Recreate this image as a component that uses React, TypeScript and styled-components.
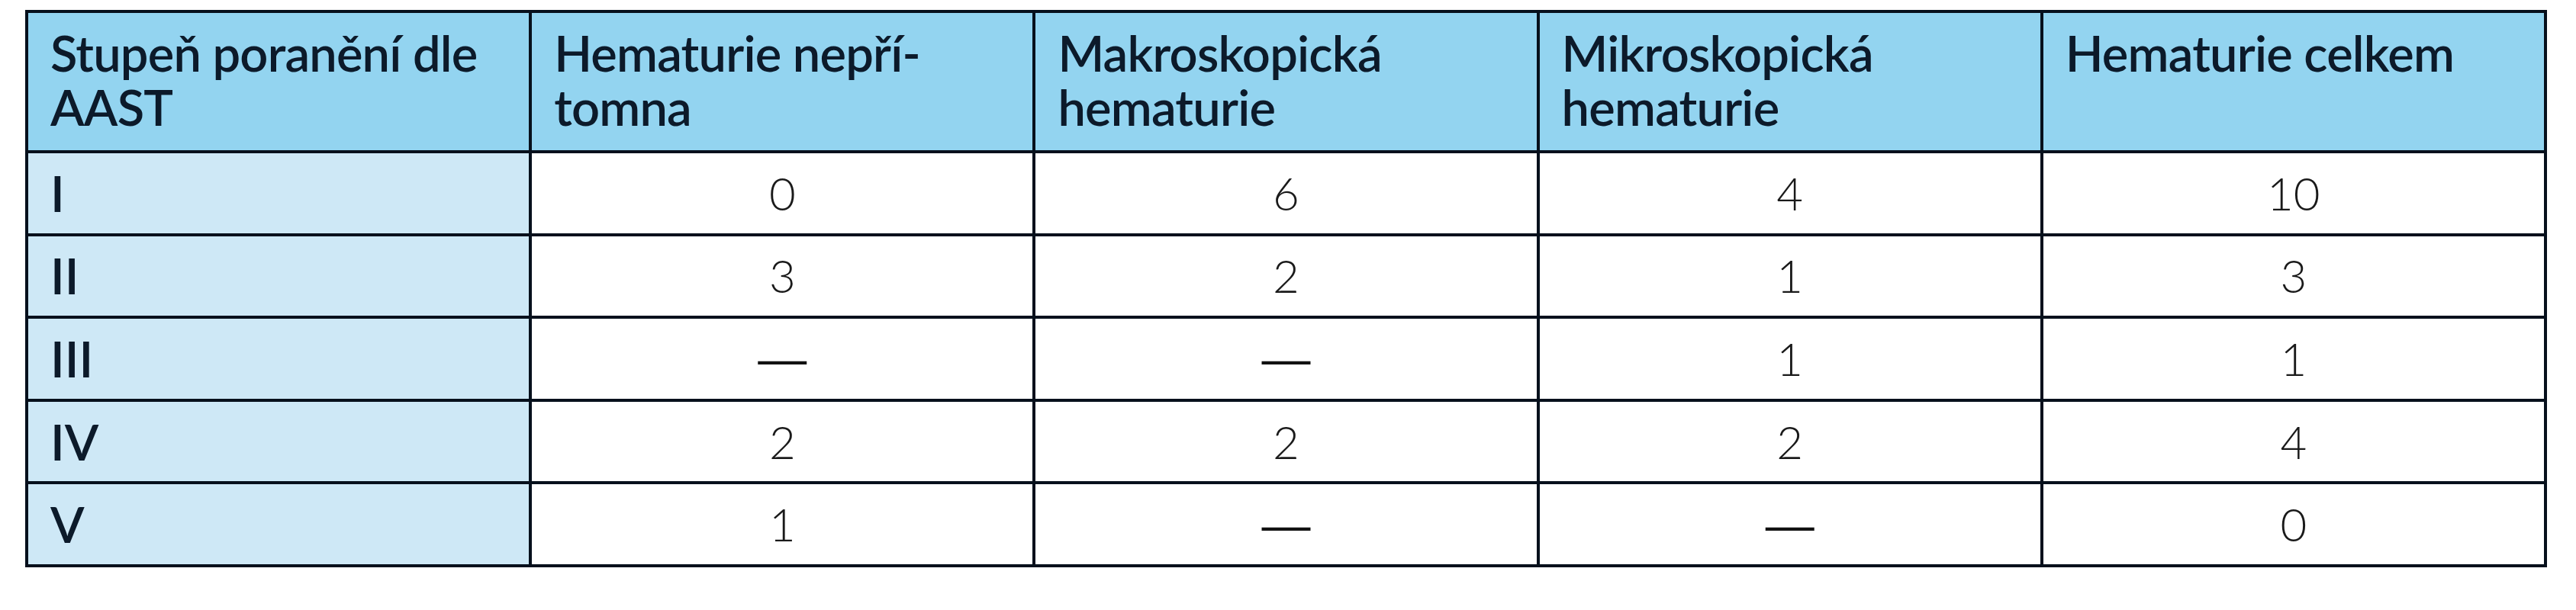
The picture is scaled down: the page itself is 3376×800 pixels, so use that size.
import React from "react";
import styled, { createGlobalStyle } from "styled-components";

const GlobalStyle = createGlobalStyle`
  html, body {
    margin: 0;
    padding: 0;
    background: #ffffff;
  }
  body {
    font-family: Lato, "Open Sans", "Liberation Sans", sans-serif;
  }
`;

const Page = styled.div`
  width: 3376px;
  height: 800px;
  padding: 13px 0 0 33px;
  box-sizing: border-box;
  background: #ffffff;
`;

const Table = styled.table`
  width: 3305px;
  table-layout: fixed;
  border-collapse: collapse;
  border: 4px solid #07101c;
`;

const HeadCell = styled.th`
  height: 184px;
  box-sizing: border-box;
  padding: 17px 20px 0 29px;
  vertical-align: top;
  text-align: left;
  background: #93d4f0;
  border: 4px solid #07101c;
  font-family: Lato, "Open Sans", sans-serif;
  font-weight: 600;
  font-size: 65px;
  line-height: 71px;
  color: #0c1a2a;
  letter-spacing: -0.8px;
`;

const Row = styled.tr`
  height: 108.6px;
`;

const GradeCell = styled.td`
  box-sizing: border-box;
  padding: 0 20px 0 29px;
  vertical-align: middle;
  text-align: left;
  background: #cee8f6;
  border: 4px solid #07101c;
  font-family: Lato, "Open Sans", sans-serif;
  font-weight: 600;
  font-size: 65px;
  line-height: 71px;
  color: #0c1a2a;
`;

const ValueCell = styled.td`
  box-sizing: border-box;
  padding: 0;
  vertical-align: middle;
  text-align: center;
  background: #ffffff;
  border: 4px solid #07101c;
  font-family: Lato, "Open Sans", sans-serif;
  font-weight: 300;
  font-size: 60px;
  line-height: 71px;
  color: #1a1a1a;
`;

const Dash = styled.span`
  font-family: "Liberation Sans", Arial, sans-serif;
  font-weight: 400;
  font-size: 64px;
  color: #111111;
`;

const headers: React.ReactNode[] = [
  <>Stupeň poranění dle<br />AAST</>,
  <>Hematurie nepří-<br />tomna</>,
  <>Makroskopická<br />hematurie</>,
  <>Mikroskopická<br />hematurie</>,
  <>Hematurie celkem</>,
];

const rows: { grade: string; values: string[] }[] = [
  { grade: "I", values: ["0", "6", "4", "10"] },
  { grade: "II", values: ["3", "2", "1", "3"] },
  { grade: "III", values: ["—", "—", "1", "1"] },
  { grade: "IV", values: ["2", "2", "2", "4"] },
  { grade: "V", values: ["1", "—", "—", "0"] },
];

export default function App() {
  return (
    <Page>
      <GlobalStyle />
      <Table>
        <thead>
          <tr>
            {headers.map((h, i) => (
              <HeadCell key={i}>{h}</HeadCell>
            ))}
          </tr>
        </thead>
        <tbody>
          {rows.map((r) => (
            <Row key={r.grade}>
              <GradeCell>{r.grade}</GradeCell>
              {r.values.map((v, i) => (
                <ValueCell key={i}>{v === "—" ? <Dash>{v}</Dash> : v}</ValueCell>
              ))}
            </Row>
          ))}
        </tbody>
      </Table>
    </Page>
  );
}
